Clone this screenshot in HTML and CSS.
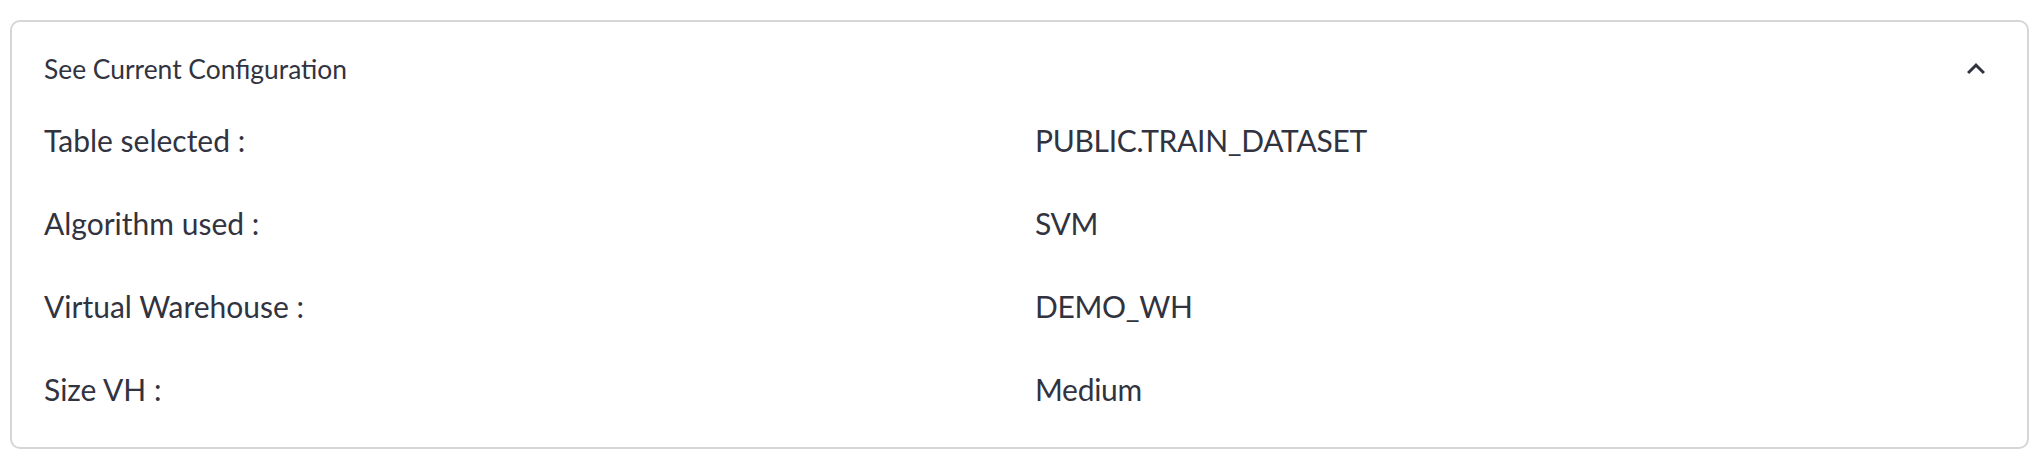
FILE: index.html
```html
<!DOCTYPE html>
<html>
<head>
<meta charset="utf-8">
<link rel="stylesheet" href="styles.css">
</head>
<body>
<div class="expander">
  <div class="summary">
    <span class="summary-label">See Current Configuration</span>
    <svg class="chevron" viewBox="0 0 24 24" width="36" height="36"><path d="M7.41 15.41L12 10.83l4.59 4.58L18 14l-6-6-6 6z" fill="#31333F"/></svg>
  </div>
  <div class="rows">
    <div class="row"><div class="key">Table selected :</div><div class="val">PUBLIC.TRAIN_DATASET</div></div>
    <div class="row"><div class="key">Algorithm used :</div><div class="val">SVM</div></div>
    <div class="row"><div class="key">Virtual Warehouse :</div><div class="val">DEMO_WH</div></div>
    <div class="row"><div class="key">Size VH :</div><div class="val">Medium</div></div>
  </div>
</div>
</body>
</html>
```
FILE: styles.css
```css
html, body {
  margin: 0;
  padding: 0;
  background: #ffffff;
}
body {
  font-family: Lato, "Liberation Sans", sans-serif;
  color: #31333F;
}
.expander {
  margin: 20px 11px 15px 10px;
  border: 2px solid #d6d6d9;
  border-radius: 10px;
  height: 425px;
}
.summary {
  height: 93px;
  display: flex;
  align-items: center;
  justify-content: space-between;
  padding: 0 33px 0 32px;
}
.summary-label {
  font-size: 26.4px;
}
.chevron {
  display: block;
}
.rows {
  display: flex;
  flex-direction: column;
  gap: 32px;
  padding: 0 33px 0 32px;
}
.row {
  display: grid;
  grid-template-columns: 1fr 1fr;
  column-gap: 32px;
  font-size: 30px;
  line-height: 51px;
}
.val {
  letter-spacing: -0.3px;
}
```
